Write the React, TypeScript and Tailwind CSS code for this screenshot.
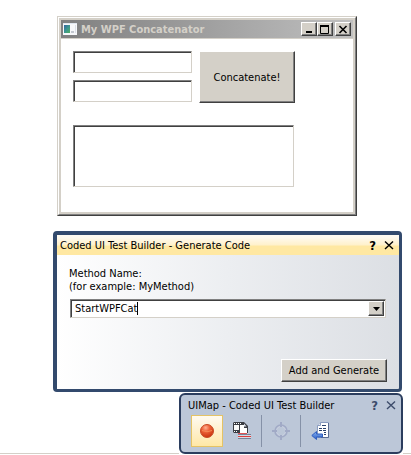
import { useState } from "react";
import type { ReactNode } from "react";

const raised =
  "bg-[#d4d0c8] border border-t-white border-l-white border-r-[#404040] border-b-[#404040] shadow-[inset_-1px_-1px_0_#808080]";
const sunken =
  "bg-white border border-t-[#808080] border-l-[#808080] border-r-[#d4d0c8] border-b-[#d4d0c8] shadow-[inset_1px_1px_0_#404040] outline-none";

const CloseIcon = () => (
  <svg width="10" height="10" viewBox="0 0 10 10" fill="none" stroke="currentColor" strokeWidth="1.4">
    <path d="M1 1.5l8 7.5M9 1.5l-8 7.5" />
  </svg>
);

const AppIcon = () => (
  <svg width="14" height="12" viewBox="0 0 14 12">
    <defs>
      <linearGradient id="appPane" x1="0" y1="0" x2="1" y2="1">
        <stop offset="0" stopColor="#3465a0" />
        <stop offset="0.5" stopColor="#3c9690" />
        <stop offset="1" stopColor="#50b060" />
      </linearGradient>
    </defs>
    <rect width="14" height="12" fill="#f7f8fa" />
    <path d="M0 0.5h14" stroke="#dfe5ee" />
    <rect x="1" y="2" width="6" height="8" fill="url(#appPane)" />
    <rect x="8" y="8" width="3" height="2" fill="#c4c8d0" />
    <rect x="12" y="2" width="1" height="8" fill="#dce0e8" />
  </svg>
);

const RecordIcon = () => (
  <svg width="16" height="16" viewBox="0 0 16 16">
    <defs>
      <radialGradient id="record" cx="0.4" cy="0.25" r="0.75">
        <stop offset="0" stopColor="#ffb091" />
        <stop offset="0.4" stopColor="#ee6339" />
        <stop offset="1" stopColor="#c9330e" />
      </radialGradient>
    </defs>
    <circle cx="8" cy="8" r="6.5" fill="url(#record)" stroke="#c84a24" />
    <path d="M3 7.5Q8 10 13 7.5" stroke="#f58a55" fill="none" />
  </svg>
);

const StepsIcon = () => (
  <svg width="18" height="18" viewBox="0 0 18 18">
    <path d="M1 0h10l4 4v7H1l-1-1V1z" fill="#3a3d44" />
    <path d="M1 1.5h8M1 9.5h4" stroke="#fff" strokeDasharray="1 1" />
    <rect x="1" y="3" width="5" height="5" fill="#fafafa" />
    <path d="M7 3h4v3h3v5H7z" fill="#fff" />
    <path d="M11 1.5L13.5 4.5H11z" fill="#dfe4ee" />
    <path d="M5 12.5h13M5 16.5h13" stroke="#77839a" />
    <path d="M5 11.5h9" stroke="#e05555" />
    <path d="M5 14.5h13" stroke="#e03c3c" />
    <path d="M5 13.5h13M5 15.5h13" stroke="#d5dae4" />
  </svg>
);

const CrosshairIcon = () => (
  <svg width="18" height="18" viewBox="0 0 18 18" fill="none" stroke="#a1aac6">
    <circle cx="9" cy="9" r="6" strokeWidth="1.6" />
    <circle cx="9" cy="9" r="4.5" stroke="#c9cfe0" />
    <path d="M9 0v5M9 13v5M0 9h5M13 9h5" strokeWidth="2" />
  </svg>
);

const GenerateIcon = () => (
  <svg width="18" height="18" viewBox="0 0 18 18">
    <defs>
      <linearGradient id="arrow" x1="0" y1="0" x2="0" y2="1">
        <stop offset="0" stopColor="#8db8f5" />
        <stop offset="1" stopColor="#2a5cc4" />
      </linearGradient>
    </defs>
    <path d="M9.5 0.5h8v15h-11v-12z" fill="#fff" stroke="#8a9cc0" />
    <path d="M17.5 1v14.5H10" fill="none" stroke="#5a6c92" />
    <path d="M6.5 3.5h3v-3" fill="#dfe5f0" stroke="#8a9cc0" />
    <path d="M11 3.5h4M8 6.5h3M12 6.5h3M8 8.5h3M12 8.5h3M13 10.5h2M13 12.5h2" stroke="#28406c" />
    <path d="M0.8 13.5l4.7-4v2.5h6v3h-6v2.5z" fill="url(#arrow)" stroke="#2f5fc0" />
  </svg>
);

const CaptionButton = ({ label, children }: { label: string; children: ReactNode }) => (
  <button aria-label={label} className={`flex h-3.5 w-4 items-center justify-center ${raised}`}>
    <svg width="10" height="9" viewBox="0 0 10 9" fill="none" stroke="#000">
      {children}
    </svg>
  </button>
);

const ConcatenatorWindow = () => (
  <section className="mr-[54px] ml-[57px] border border-t-[#d4d0c8] border-l-[#d4d0c8] border-r-[#404040] border-b-[#404040]">
    <div className="border border-t-white border-l-white border-r-[#808080] border-b-[#808080]">
      <div className="border-2 border-[#d4d0c8] bg-white">
        <header className="flex h-[19px] items-center border-b border-[#d4d0c8] bg-linear-to-r from-[#808080] to-[#c0c0c0] pr-0.5 pl-0.5">
          <AppIcon />
          <h1 className="ml-1 flex-1 text-[11px] font-bold text-[#d4d0c8]">My WPF Concatenator</h1>
          <CaptionButton label="Minimize">
            <path d="M2 7h6" strokeWidth="2" />
          </CaptionButton>
          <CaptionButton label="Maximize">
            <path d="M0.5 0v8.5h8V0" />
            <path d="M0 1h9" strokeWidth="2" />
          </CaptionButton>
          <span className="w-0.5" />
          <CaptionButton label="Close">
            <path d="M1.5 1l7 7M8.5 1l-7 7" strokeWidth="1.6" />
          </CaptionButton>
        </header>
        <div className="px-3 pt-3 pb-[25px]">
          <div className="flex gap-[7px]">
            <div className="flex w-[119px] flex-col gap-[7px]">
              <input aria-label="First text" className={`h-[22px] px-1 ${sunken}`} />
              <input aria-label="Second text" className={`h-[22px] px-1 ${sunken}`} />
            </div>
            <button className={`h-[52px] w-24 ${raised}`}>Concatenate!</button>
          </div>
          <textarea
            aria-label="Result"
            className={`mt-[22px] block h-[62px] w-[221px] resize-none p-1 ${sunken}`}
          />
        </div>
      </div>
    </div>
  </section>
);

const GenerateDialog = () => {
  const [name, setName] = useState("StartWPFCat");

  return (
    <section className="mt-[15px] mr-[9px] ml-[53px] rounded-[4px] border-4 border-r-3 border-b-3 border-[#334a6d] bg-linear-to-r from-white via-[#eceef1] to-[#dcdfe4]">
      <header className="flex h-5 items-center bg-linear-to-b from-[#fffaf0] from-10% via-[#fff1cb] via-50% to-[#ffe8a2] to-55% pr-[5px] pl-[3px]">
        <h2 className="flex-1">Coded UI Test Builder - Generate Code</h2>
        <button aria-label="Help" className="mr-2 text-[13px] font-bold">?</button>
        <button aria-label="Close"><CloseIcon /></button>
      </header>
      <div className="pt-3 pr-3 pb-[7px] pl-3">
        <label htmlFor="method" className="block leading-[13px]">
          Method Name:
          <br />
          (for example: MyMethod)
        </label>
        <div className={`mt-1.5 mr-px ml-px flex h-[19px] p-px pl-1 ${sunken}`}>
          <input
            id="method"
            value={name}
            onChange={(e) => setName(e.target.value)}
            className="field-sizing-content outline-none"
          />
          <span className="my-px w-px bg-black" />
          <span className="flex-1" />
          <button aria-label="Show method names" className={`flex w-4 items-center justify-center ${raised}`}>
            <svg width="7" height="4" viewBox="0 0 7 4">
              <path d="M0 0h7L3.5 4z" />
            </svg>
          </button>
        </div>
        <div className="mt-[41px] flex justify-end">
          <button className={`h-[23px] w-[106px] ${raised}`}>Add and Generate</button>
        </div>
      </div>
    </section>
  );
};

const Toolbar = () => (
  <section className="w-56 rounded-md border-2 border-[#2b3d5e] bg-[#bcc7d8] pb-[5px]">
    <header className="flex h-5 items-center pr-[5px] pl-[7px]">
      <h2 className="flex-1">UIMap - Coded UI Test Builder</h2>
      <button aria-label="Help" className="mr-2 text-[13px] font-bold text-[#3d4c6b]">?</button>
      <button aria-label="Close" className="text-[#3d4c6b]"><CloseIcon /></button>
    </header>
    <div className="flex h-8 items-center pl-2.5">
      <button
        aria-label="Record"
        className="flex size-8 items-center justify-center border border-[#e5c365] bg-linear-to-b from-[#fffaf0] via-[#fff0cc] to-[#ffe8a6]"
      >
        <RecordIcon />
      </button>
      <button aria-label="Show recorded steps" className="flex w-[38px] justify-center">
        <StepsIcon />
      </button>
      <span className="h-8 w-px bg-[#8591a7]" />
      <button aria-label="Add assertions" className="flex w-[38px] justify-center" disabled>
        <CrosshairIcon />
      </button>
      <span className="h-8 w-px bg-[#8591a7]" />
      <button aria-label="Generate code" className="flex w-[38px] justify-center">
        <GenerateIcon />
      </button>
    </div>
  </section>
);

export default function App() {
  return (
    <main className="bg-white pt-4 font-['DejaVu_Sans_Condensed','DejaVu_Sans',sans-serif] text-[11px] leading-[13px] text-black">
      <ConcatenatorWindow />
      <GenerateDialog />
      <div className="mt-px flex">
        <span className="flex-1 border-b border-[#d4d0c8]" />
        <Toolbar />
        <span className="w-2 border-b border-[#d4d0c8]" />
      </div>
    </main>
  );
}
